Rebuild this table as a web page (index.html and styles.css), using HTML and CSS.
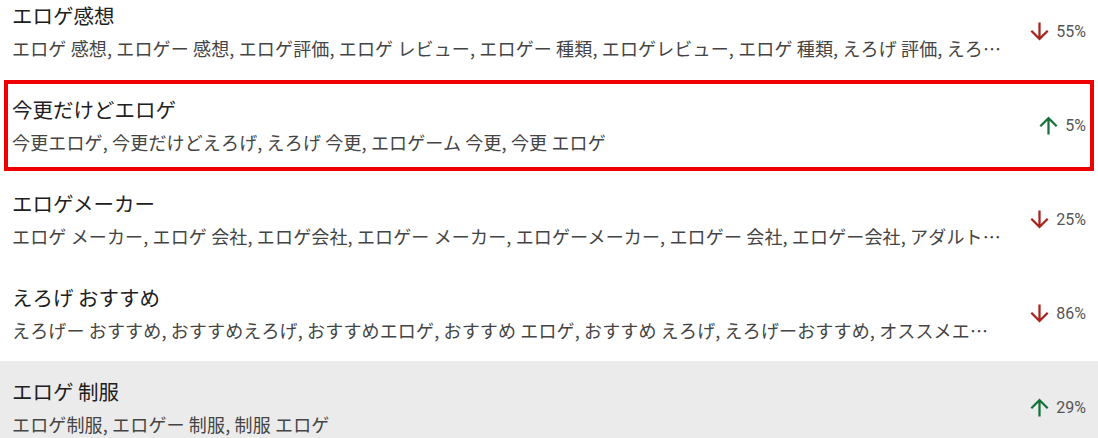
FILE: index.html
```html
<!DOCTYPE html>
<html lang="ja">
<head>
<meta charset="utf-8">
<title>Related searches</title>
<link rel="stylesheet" href="styles.css">
</head>
<body>
<ul class="list">
  <li class="row">
    <div class="main">
      <div class="title">エロゲ感想</div>
      <div class="kw">エロゲ 感想, エロゲー 感想, エロゲ評価, エロゲ レビュー, エロゲー 種類, エロゲレビュー, エロゲ 種類, えろげ 評価, えろ…</div>
    </div>
    <div class="trend down">
      <svg viewBox="0 0 24 24" class="arrow"><path d="M20 12l-1.41-1.41L13 16.17V4h-2v12.17l-5.58-5.59L4 12l8 8 8-8z"/></svg>
      <span class="pct">55%</span>
    </div>
  </li>
  <li class="row selected">
    <div class="main">
      <div class="title">今更だけどエロゲ</div>
      <div class="kw">今更エロゲ, 今更だけどえろげ, えろげ 今更, エロゲーム 今更, 今更 エロゲ</div>
    </div>
    <div class="trend up">
      <svg viewBox="0 0 24 24" class="arrow"><path d="M4 12l1.41 1.41L11 7.83V20h2V7.83l5.58 5.59L20 12l-8-8-8 8z"/></svg>
      <span class="pct">5%</span>
    </div>
  </li>
  <li class="row">
    <div class="main">
      <div class="title">エロゲメーカー</div>
      <div class="kw">エロゲ メーカー, エロゲ 会社, エロゲ会社, エロゲー メーカー, エロゲーメーカー, エロゲー 会社, エロゲー会社, アダルト…</div>
    </div>
    <div class="trend down">
      <svg viewBox="0 0 24 24" class="arrow"><path d="M20 12l-1.41-1.41L13 16.17V4h-2v12.17l-5.58-5.59L4 12l8 8 8-8z"/></svg>
      <span class="pct">25%</span>
    </div>
  </li>
  <li class="row">
    <div class="main">
      <div class="title">えろげ おすすめ</div>
      <div class="kw">えろげー おすすめ, おすすめえろげ, おすすめエロゲ, おすすめ エロゲ, おすすめ えろげ, えろげーおすすめ, オススメエ…</div>
    </div>
    <div class="trend down">
      <svg viewBox="0 0 24 24" class="arrow"><path d="M20 12l-1.41-1.41L13 16.17V4h-2v12.17l-5.58-5.59L4 12l8 8 8-8z"/></svg>
      <span class="pct">86%</span>
    </div>
  </li>
  <li class="row hover">
    <div class="main">
      <div class="title">エロゲ 制服</div>
      <div class="kw">エロゲ制服, エロゲー 制服, 制服 エロゲ</div>
    </div>
    <div class="trend up">
      <svg viewBox="0 0 24 24" class="arrow"><path d="M4 12l1.41 1.41L11 7.83V20h2V7.83l5.58 5.59L20 12l-8-8-8 8z"/></svg>
      <span class="pct">29%</span>
    </div>
  </li>
</ul>
</body>
</html>
```

FILE: styles.css
```css
html, body {
  margin: 0;
  padding: 0;
  background: #ffffff;
  overflow: hidden;
}

body {
  font-family: "Noto Sans CJK JP", "Noto Sans", sans-serif;
  color: #222222;
}

.list {
  list-style: none;
  margin: -15px 0 0 0;
  padding: 0;
}

.row {
  position: relative;
  display: flex;
  align-items: center;
  height: 94px;
  box-sizing: border-box;
  padding: 0 12px 2px 12px;
}

.row.hover {
  background: #ebebeb;
}

.row.selected::after {
  content: "";
  position: absolute;
  top: 1px;
  bottom: 2px;
  left: 4px;
  right: 4px;
  border: 4px solid #ee0000;
  pointer-events: none;
}

.main {
  flex: 1;
  min-width: 0;
  max-width: 990px;
  display: flex;
  flex-direction: column;
  gap: 6px;
}

.title {
  font-size: 20.5px;
  line-height: 28px;
  color: #202020;
  white-space: nowrap;
}

.kw {
  font-size: 18px;
  line-height: 26px;
  letter-spacing: 0.15px;
  color: #444444;
  white-space: nowrap;
  overflow: hidden;
  text-overflow: ellipsis;
}

.trend {
  margin-left: auto;
  flex: none;
  display: flex;
  align-items: center;
  gap: 3px;
}

.arrow {
  width: 27px;
  height: 27px;
}

.down .arrow {
  fill: #a8231c;
}

.up .arrow {
  fill: #16703a;
}

.pct {
  font-family: Roboto, "Liberation Sans", sans-serif;
  font-size: 16px;
  color: #555555;
}
```
